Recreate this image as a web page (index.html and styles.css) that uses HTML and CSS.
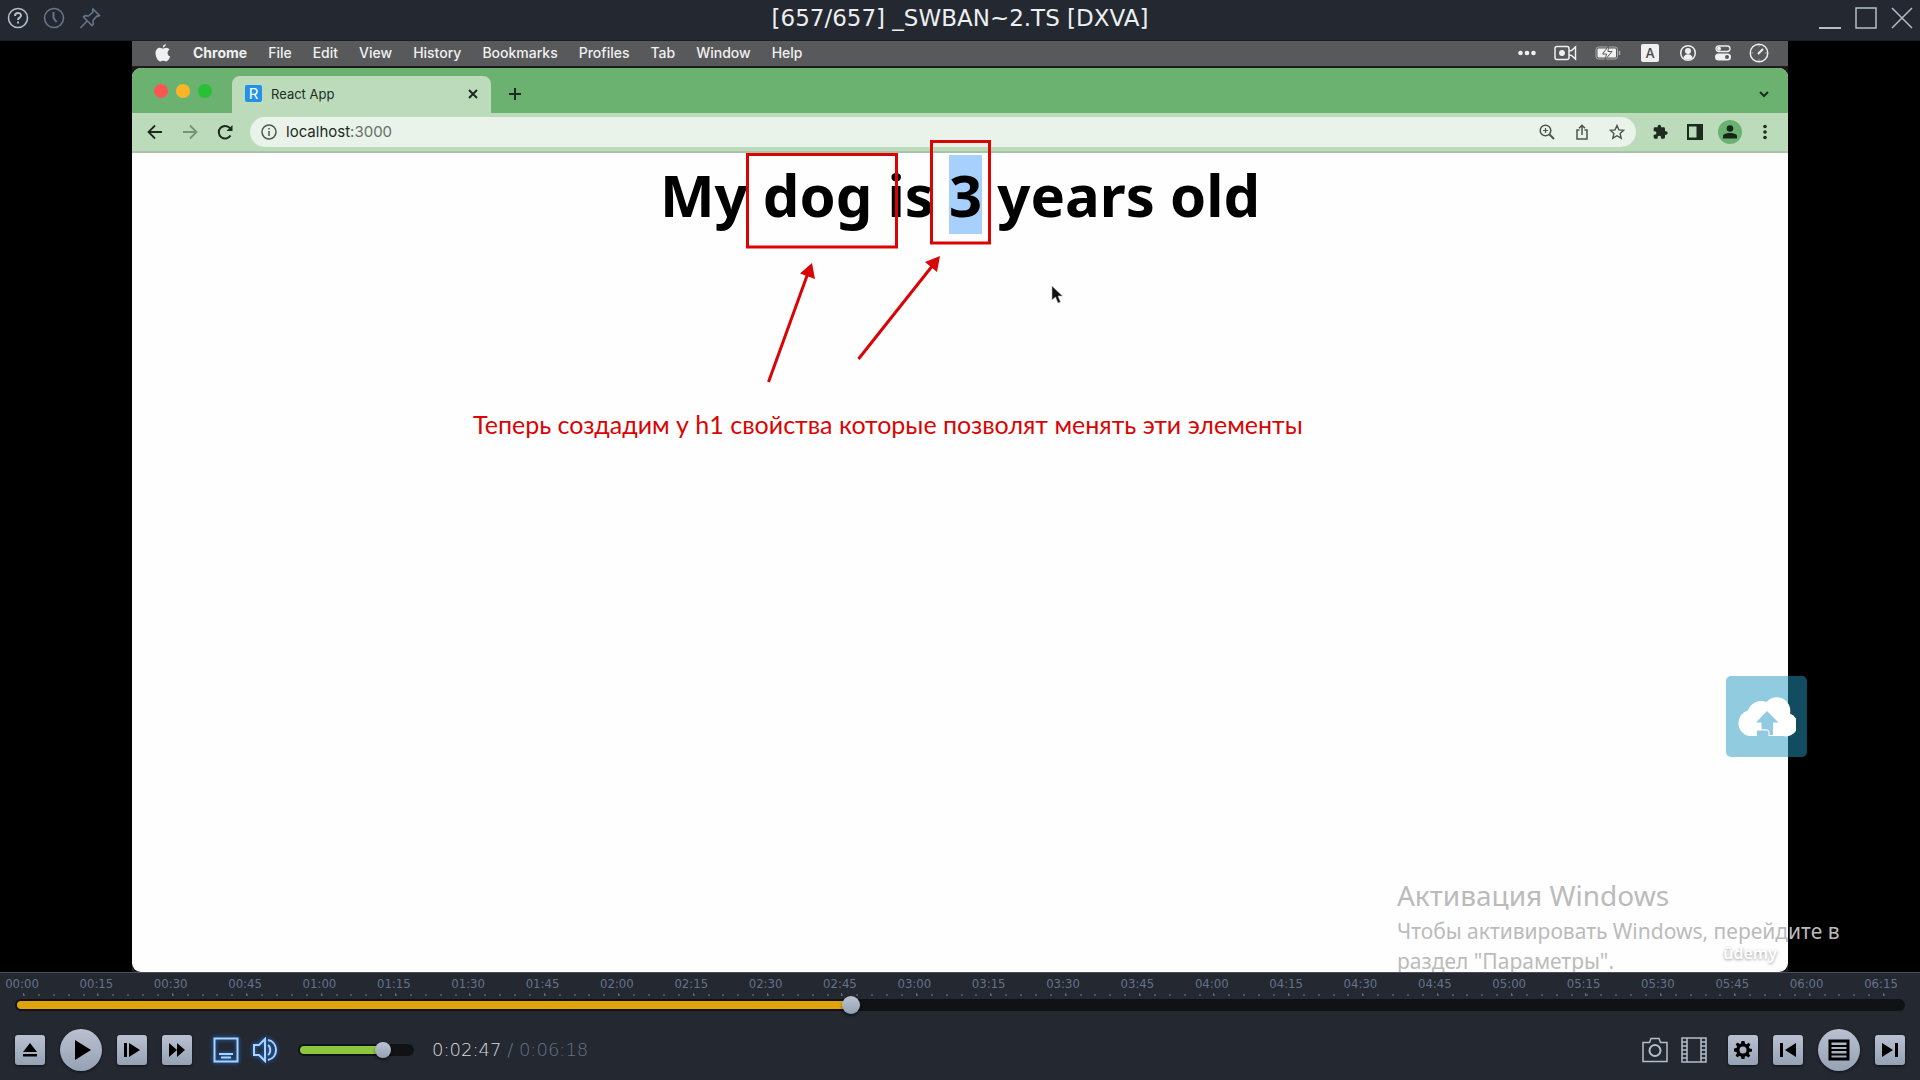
FILE: index.html
```html
<!DOCTYPE html>
<html lang="ru">
<head>
<meta charset="utf-8">
<title>[657/657] _SWBAN~2.TS [DXVA]</title>
<link rel="stylesheet" href="styles.css">
</head>
<body>
<header class="titlebar">
  <div class="titlebar-side">
    <button class="icon-btn bright" aria-label="Help"><svg width="22" height="22" viewBox="0 0 22 22" fill="none" stroke="currentColor" stroke-width="2"><circle cx="11" cy="11" r="9.5" stroke-width="1.6"/><path d="M8 9c0-4 6-4 6-.6 0 2.200-3 2.200-3 4.600M11 14.500v2"/></svg></button>
    <button class="icon-btn dim" aria-label="History"><svg width="22" height="22" viewBox="0 0 22 22" fill="none" stroke="currentColor" stroke-width="1.600"><circle cx="11" cy="11" r="9.500"/><path d="M10.500 5v6l3 4" stroke-width="2"/></svg></button>
    <button class="icon-btn dim" aria-label="Pin"><svg width="22" height="22" viewBox="0 0 22 22" fill="none" stroke="currentColor" stroke-width="1.600"><path d="M14 2l6.500 6.500-1.500.8-1-.3-4 4.500.3 3.500-1.300 1.500-8.500-8.500 1.500-1.300 3.500.3L14 5l-.5-1.500zM8.500 13.500L1.500 21"/></svg></button>
  </div>
  <h2 class="titlebar-title">[657/657] _SWBAN~2.TS [DXVA]</h2>
  <div class="titlebar-side end">
    <button class="icon-btn bright" aria-label="Minimize"><svg width="22" height="22" viewBox="0 0 22 22" stroke="currentColor" stroke-width="2"><path d="M0 21h22"/></svg></button>
    <button class="icon-btn bright" aria-label="Maximize"><svg width="22" height="22" viewBox="0 0 22 22" fill="none" stroke="currentColor" stroke-width="1.500"><path d="M1 1h20v20H1z"/></svg></button>
    <button class="icon-btn bright" aria-label="Close"><svg width="22" height="22" viewBox="0 0 22 22" stroke="currentColor" stroke-width="1.500"><path d="M1 1l20 20M21 1L1 21"/></svg></button>
  </div>
</header>

<main class="stage">
  <div class="video">
    <nav class="menubar">
      <svg class="apple" width="16" height="18" viewBox="0 0 16 18" fill="currentColor"><path d="M10.800 0c.2 1.600-1.300 3.500-3 3.500C7.600 1.900 9.200.2 10.800 0zM8 4.600c.8 0 1.700-.9 3.200-.9 1.400 0 2.700.8 3.400 1.900-3 1.800-2.500 5.800.6 7-.7 1.900-2.300 4.900-4.200 4.900-1.100 0-1.500-.7-2.800-.7s-1.800.7-2.800.7C3 17.500.5 13 .5 9.300c0-3.600 2.300-5.500 4.400-5.500 1.300 0 2.300.8 3.100.8z"/></svg>
      <a href="#" class="menu-app">Chrome</a><a href="#">File</a><a href="#">Edit</a><a href="#">View</a><a href="#">History</a><a href="#">Bookmarks</a><a href="#">Profiles</a><a href="#">Tab</a><a href="#">Window</a><a href="#">Help</a>
      <div class="status">
        <svg width="18" height="16" viewBox="0 0 18 16" fill="currentColor"><circle cx="2.500" cy="8" r="2.300"/><circle cx="9" cy="8" r="2.300"/><circle cx="15.500" cy="8" r="2.300"/></svg>
        <svg width="23" height="16" viewBox="0 0 23 16" fill="none" stroke="currentColor" stroke-width="1.500"><rect x="1" y="1.500" width="14" height="13" rx="2"/><circle cx="8" cy="8" r="2.200" fill="currentColor"/><path d="M15 6l2.500-.5L21.500 2v12l-4-3.500L15 10"/></svg>
        <svg width="26" height="16" viewBox="0 0 26 16"><rect x="1" y="2" width="21.500" height="12" rx="2.500" fill="none" stroke="#aaa"/><rect x="2.500" y="3.500" width="18.500" height="9" rx="1" fill="currentColor"/><path d="M13.500 1L7.500 9h4l-1.500 6 7-8.500h-4z" fill="currentColor" stroke="#58595b"/><path d="M24.500 6v4" stroke="#aaa" stroke-width="1.500"/></svg>
        <span class="lang">A</span>
        <svg width="18" height="18" viewBox="0 0 18 18" fill="currentColor"><circle cx="9" cy="9" r="7.300" fill="none" stroke="currentColor" stroke-width="1.500"/><circle cx="9" cy="7" r="3"/><path d="M4.500 14c0-5 9-5 9 0-2 2-7 2-9 0z"/></svg>
        <svg width="16" height="16" viewBox="0 0 16 16" fill="currentColor"><rect x="1" y="1" width="14" height="5.500" rx="2.700" fill="none" stroke="currentColor" stroke-width="1.300"/><circle cx="4" cy="3.800" r="2"/><rect x="0" y="8.500" width="16" height="7" rx="3.500"/><circle cx="12" cy="12" r="2" fill="#58595b"/></svg>
        <svg width="20" height="20" viewBox="0 0 20 20" fill="none" stroke="currentColor" stroke-width="1.400"><circle cx="10" cy="10" r="8.800"/><path d="M9 11l5-5" stroke-width="2"/><path d="M10 2.500v1M17.500 10h-1M10 17.500v-1M2.500 10h1" stroke-width="1"/></svg>
      </div>
    </nav>

    <section class="browser">
      <div class="tabstrip">
        <div class="lights"><i class="light red"></i><i class="light yellow"></i><i class="light green"></i></div>
        <div class="tab">
          <span class="favicon">R</span><span class="tab-title">React App</span>
          <button class="icon-btn dark" aria-label="Close tab"><svg width="10" height="10" viewBox="0 0 10 10" stroke="currentColor" stroke-width="2"><path d="M1 1l8 8M9 1L1 9"/></svg></button>
        </div>
        <button class="icon-btn dark new-tab" aria-label="New tab"><svg width="14" height="14" viewBox="0 0 14 14" stroke="currentColor" stroke-width="2"><path d="M7 1v12M1 7h12"/></svg></button>
        <button class="icon-btn dark tab-list" aria-label="Search tabs"><svg width="10" height="10" viewBox="0 0 10 10" fill="none" stroke="currentColor" stroke-width="2"><path d="M1 3l4 4 4-4"/></svg></button>
      </div>
      <div class="toolbar">
        <button class="icon-btn dark" aria-label="Back"><svg width="16" height="16" viewBox="0 0 16 16" fill="none" stroke="currentColor" stroke-width="1.800"><path d="M15 8H2M8 1.500L1.500 8 8 14.500"/></svg></button>
        <button class="icon-btn faded" aria-label="Forward"><svg width="16" height="16" viewBox="0 0 16 16" fill="none" stroke="currentColor" stroke-width="1.800"><path d="M1 8h13M8 1.500L14.500 8 8 14.500"/></svg></button>
        <button class="icon-btn dark" aria-label="Reload"><svg width="16" height="16" viewBox="0 0 16 16" fill="none" stroke="currentColor" stroke-width="2"><path d="M13.500 11.500A6.300 6.300 0 1 1 13 4.200"/><path d="M15.500 1v6h-6z" fill="currentColor" stroke="none"/></svg></button>
        <div class="omnibox">
          <svg width="16" height="16" viewBox="0 0 16 16" fill="none" stroke="currentColor" stroke-width="1.500"><circle cx="8" cy="8" r="7"/><path d="M8 7v5M8 4v1.600"/></svg>
          <div class="url">localhost<span class="port">:3000</span></div>
          <button class="icon-btn" aria-label="Zoom"><svg width="16" height="16" viewBox="0 0 16 16" fill="none" stroke="currentColor" stroke-width="1.500"><circle cx="6.500" cy="6.500" r="5.300"/><path d="M10.500 10.500L15 15" stroke-width="2"/><path d="M6.500 4v5M4 6.500h5" stroke-width="1.200"/></svg></button>
          <button class="icon-btn" aria-label="Share"><svg width="16" height="16" viewBox="0 0 16 16" fill="none" stroke="currentColor" stroke-width="1.500"><path d="M5.500 6H3v9h10V6h-2.500M8 11V1.500M5 4.300l3-3 3 3"/></svg></button>
          <button class="icon-btn" aria-label="Bookmark"><svg width="16" height="16" viewBox="0 0 16 16" fill="none" stroke="currentColor" stroke-width="1.400"><path d="M8 1.500l1.900 4.400 4.800.4-3.600 3.200 1.100 4.700L8 11.700l-4.200 2.500 1.100-4.700L1.300 6.300l4.800-.4z"/></svg></button>
        </div>
        <div class="tools">
          <button class="icon-btn dark" aria-label="Extensions"><svg width="16" height="16" viewBox="0 0 24 24" fill="currentColor"><path d="M21 11h-1.500V7a2 2 0 0 0-2-2h-4V3.500a2.500 2.500 0 0 0-5 0V5h-4a2 2 0 0 0-2 2v3.800H4a2.700 2.700 0 0 1 0 5.400H2.500V20a2 2 0 0 0 2 2h3.800v-1.500a2.700 2.700 0 0 1 5.400 0V22h3.800a2 2 0 0 0 2-2v-4H21a2.500 2.500 0 0 0 0-5z"/></svg></button>
          <button class="icon-btn dark" aria-label="Side panel"><svg width="16" height="16" viewBox="0 0 16 16" fill="currentColor"><path d="M0 0h16v16H0zM2 2.500v11h7.500v-11z" fill-rule="evenodd"/></svg></button>
          <button class="icon-btn avatar" aria-label="Profile"><svg width="14" height="14" viewBox="0 0 14 14" fill="currentColor"><circle cx="7" cy="3.500" r="3.300"/><path d="M0 13.500V11c0-4 14-4 14 0v2.500z"/></svg></button>
          <button class="icon-btn dark" aria-label="More"><svg width="16" height="16" viewBox="0 0 16 16" fill="currentColor"><circle cx="8" cy="2.500" r="1.800"/><circle cx="8" cy="8" r="1.800"/><circle cx="8" cy="13.500" r="1.800"/></svg></button>
        </div>
      </div>
      <div class="page">
        <h1 class="headline">My dog is <mark>3</mark> years old</h1>
        <p class="caption">Теперь создадим у h1 свойства которые позволят менять эти элементы</p>
        <svg class="notes" width="330" height="260" viewBox="740 135 330 260" fill="none" stroke="#d90404" stroke-width="3">
          <path d="M747.500 154.500h149v92.500h-149zM931.500 141.500h58v101.500h-58z"/>
          <path d="M768.500 382L808 273M858.500 359L933 265"/>
          <path d="M812 263l3 16-15-5.500zM940 256l-3 16-12-10z" fill="#d90404" stroke="none"/>
          <path d="M1052 286v14l3.500-3 2.500 6 2.500-1-2.500-6h4.500z" fill="#111" stroke="#bbb" stroke-width=".6"/>
        </svg>
        <span class="brand">ûdemy</span>
      </div>
    </section>
  </div>

  <aside class="activation">
    <p class="activation-title">Активация Windows</p>
    <p class="activation-text">Чтобы активировать Windows, перейдите в раздел "Параметры".</p>
  </aside>
  <button class="upload" aria-label="Upload"><svg width="58" height="40" viewBox="2 0 58 40"><path d="M13 39A12.500 13 0 0 1 12 13.500 14 14 0 0 1 30.500 5 13.500 13.500 0 0 1 54 16.500 11.800 11.800 0 0 1 47 39z" fill="#fff"/><path d="M31 14l11.500 11.500H37V38h-3.500c.5-6-2-6-8-5.500V25.500H20zM21 33.500h10c2 0 1.500 3 1.500 5.500H21z" fill="#92cae1"/></svg></button>
</main>

<footer class="player">
  <div class="ruler"><span>00:00</span><span>00:15</span><span>00:30</span><span>00:45</span><span>01:00</span><span>01:15</span><span>01:30</span><span>01:45</span><span>02:00</span><span>02:15</span><span>02:30</span><span>02:45</span><span>03:00</span><span>03:15</span><span>03:30</span><span>03:45</span><span>04:00</span><span>04:15</span><span>04:30</span><span>04:45</span><span>05:00</span><span>05:15</span><span>05:30</span><span>05:45</span><span>06:00</span><span>06:15</span></div>
  <div class="ticks"></div>
  <input class="slider seek" type="range" min="0" max="378" value="167" aria-label="Position" style="--fill: 44.2%">
  <div class="controls">
    <button class="key" aria-label="Eject"><svg width="16" height="16" viewBox="0 0 16 16"><path d="M8 1l7 9H1zM1 12h14v2.500H1z"/></svg></button>
    <button class="key round" aria-label="Play"><svg width="20" height="20" viewBox="0 0 20 20"><path d="M4 0l16 10L4 20z"/></svg></button>
    <button class="key" aria-label="Step"><svg width="16" height="16" viewBox="0 0 16 16"><path d="M0 1h3v14H0zM5 1l11 7-11 7z"/></svg></button>
    <button class="key" aria-label="Fast forward"><svg width="16" height="16" viewBox="0 0 16 16"><path d="M0 1l8 7-8 7zM8 1l8 7-8 7z"/></svg></button>
    <div class="toggles">
      <button class="icon-btn glow" aria-label="Screen"><svg width="26" height="26" viewBox="0 0 26 26" fill="none" stroke="currentColor" stroke-width="2"><path d="M1.500 1.500h23v23h-23zM6 17h14M8 20.500h10"/></svg></button>
      <button class="icon-btn glow" aria-label="Mute"><svg width="26" height="26" viewBox="0 0 26 26" fill="none" stroke="currentColor" stroke-width="2"><path d="M2 8h5l6-6v22l-6-6H2zM16 8c3 2 3 8 0 10M16 3c5 1 8 5 8 10s-3 9-8 10"/></svg></button>
    </div>
    <input class="slider volume" type="range" min="0" max="100" value="78" aria-label="Volume" style="--fill: 75%">
    <div class="time">0:02:47 <span class="total">/ 0:06:18</span></div>
    <div class="extras">
      <button class="icon-btn bright" aria-label="Snapshot"><svg width="26" height="26" viewBox="0 0 26 26" fill="none" stroke="currentColor" stroke-width="1.500"><path d="M1 5.500h6.500L9 1.500h8l1.500 4H25v19H1z"/><circle cx="13" cy="13.500" r="5.500" stroke-width="2"/></svg></button>
      <button class="icon-btn bright" aria-label="Record"><svg width="26" height="26" viewBox="0 0 26 26" fill="none" stroke="currentColor" stroke-width="1.500"><path d="M1 1h24v24H1zM6 1v24M20 1v24M1 5h5M1 9h5M1 13h5M1 17h5M1 21h5M20 5h5M20 9h5M20 13h5M20 17h5M20 21h5"/></svg></button>
    </div>
    <button class="key" aria-label="Settings"><svg width="18" height="18" viewBox="0 0 18 18"><path d="M7.500 0h3l.5 2.500 1.500.7L14.700 1.800l1.700 1.900-1.500 2.100.6 1.600L18 8v2.500l-2.500.5-.7 1.500 1.400 2.200-1.900 1.800-2.100-1.500-1.400.6L10.500 18h-3L7 15.500l-1.500-.6-2.200 1.400-1.800-1.900L3 12.300 2.400 11 0 10.500v-3L2.500 7l.6-1.500L1.700 3.300l1.900-1.800L5.700 3 7 2.500zM9 5.500a3.500 3.500 0 1 0 0 7 3.500 3.500 0 0 0 0-7z" fill-rule="evenodd"/></svg></button>
    <button class="key" aria-label="Previous"><svg width="16" height="16" viewBox="0 0 16 16"><path d="M0 1h3v14H0zM16 1v14L5 8z"/></svg></button>
    <button class="key round" aria-label="Playlist"><svg width="22" height="22" viewBox="0 0 22 22" fill="none" stroke="#000" stroke-width="3"><path d="M2 2h18v18H2z"/><path d="M3 7h16M3 11h16M3 15.500h16" stroke-width="2"/></svg></button>
    <button class="key" aria-label="Next"><svg width="16" height="16" viewBox="0 0 16 16"><path d="M13 1h3v14h-3zM0 1l11 7-11 7z"/></svg></button>
  </div>
</footer>
</body>
</html>
```
FILE: styles.css
```css
* { box-sizing: border-box; }

body {
  margin: 0;
  min-height: 100vh;
  display: flex;
  flex-direction: column;
  background: #000;
  font-family: "Noto Sans", sans-serif;
}

h1, h2, p { margin: 0; font-weight: 400; }
a { color: inherit; text-decoration: none; }
svg { display: block; flex: none; }
button { font: inherit; cursor: pointer; }

.icon-btn {
  display: flex;
  padding: 0;
  border: 0;
  background: none;
  color: #4b574c;
}
.icon-btn.bright { color: #b4bdca; }
.icon-btn.dim { color: #65758a; }
.icon-btn.dark { color: #1d2b1f; }
.icon-btn.faded { color: #779279; }

/* Player title bar */
.titlebar {
  display: flex;
  align-items: center;
  height: 41px;
  padding: 0 7px 4px;
  background: #242831;
  border-bottom: 1px solid #1a1d23;
}
.titlebar-side { display: flex; flex: 1; gap: 14px; }
.titlebar-side.end { justify-content: flex-end; }
.titlebar-title {
  font: 23px/30px "DejaVu Sans", sans-serif;
  color: #eceef0;
}

/* Video area */
.stage {
  position: relative;
  flex: 1;
  display: flex;
  padding: 0 6.875%;
}
.video { flex: 1; display: flex; flex-direction: column; background: #1c1c1d; }

.menubar {
  display: flex;
  align-items: center;
  gap: 21px;
  height: 25px;
  padding: 0 19px 1px 23px;
  background: #58595b;
  color: #f0f0f0;
  font: 500 14px/24px Inter, sans-serif;
}
.apple { margin-right: 1px; }
.menu-app { font-weight: 700; }
.status { display: flex; align-items: center; gap: 18px; margin-left: auto; }
.lang {
  width: 18px;
  height: 18px;
  margin: 0 2px;
  border-radius: 2px;
  background: #f0f0f0;
  color: #444;
  font-size: 13px;
  line-height: 18px;
  text-align: center;
}

/* Browser window */
.browser {
  flex: 1;
  display: flex;
  flex-direction: column;
  margin-top: 2px;
  border-radius: 9px;
  background: #fefefe;
}
.tabstrip {
  display: flex;
  align-items: center;
  height: 45px;
  padding: 8px 19px 0 22px;
  border-radius: 9px 9px 0 0;
  background: #6bb270;
}
.tabstrip > .icon-btn { padding-bottom: 2px; }
.lights { display: flex; gap: 8px; width: 78px; padding-bottom: 8px; }
.light { width: 14px; height: 14px; border-radius: 50%; }
.light.red { background: #fc5650; }
.light.yellow { background: #fdb526; }
.light.green { background: #27c138; }
.tab {
  display: flex;
  align-items: center;
  width: 259px;
  height: 37px;
  padding: 0 13px 2px;
  border-radius: 8px 8px 0 0;
  background: #bbdbbb;
  font: 13px/18px Inter, sans-serif;
  color: #222d23;
}
.favicon {
  width: 17px;
  height: 17px;
  border-radius: 2px;
  background: #2491e8;
  color: #fff;
  font-size: 15px;
  line-height: 17px;
  text-align: center;
}
.tab-title { flex: 1; margin-left: 9px; }
.new-tab { margin-left: 17px; }
.tab-list { margin-left: auto; }

.toolbar {
  display: flex;
  align-items: center;
  gap: 19px;
  height: 40px;
  padding: 0 15px;
  background: #bbdbbb;
  border-bottom: 2px solid #a9c3a9;
}
.omnibox {
  flex: 1;
  display: flex;
  align-items: center;
  gap: 19px;
  height: 30px;
  margin-left: -2px;
  padding: 0 11px;
  border-radius: 15px;
  background: #e9f3e9;
  color: #4b574c;
}
.url { flex: 1; margin-left: -10px; font: 15px/20px Inter, sans-serif; color: #1d2b1f; }
.port { color: #657066; }
.tools { display: flex; align-items: center; gap: 19px; margin-left: -3px; }
.avatar {
  width: 24px;
  height: 24px;
  margin: 0 -4px;
  align-items: center;
  justify-content: center;
  border-radius: 50%;
  background: #6bb270;
  color: #17261a;
}

.page { position: relative; flex: 1; }
.headline {
  font-size: 58px;
  font-weight: 700;
  line-height: 84px;
  text-align: center;
  color: #000;
}
.headline mark { background: #a8d0fd; color: inherit; }
.caption {
  margin: 171px 0 0 341px;
  font: 25px/32px Lato, sans-serif;
  color: #d90404;
}
.notes { position: absolute; top: -18px; left: calc(50% - 220px); }
.brand {
  position: absolute;
  right: 11px;
  bottom: 7px;
  font: 600 16px/24px "Noto Sans", sans-serif;
  color: #fff;
  text-shadow: 0 1px 3px #999;
}

/* Floating overlays */
.activation {
  position: absolute;
  right: 75px;
  bottom: -4px;
  width: 448px;
  color: #bbb;
}
.activation-title { margin-bottom: 2px; font-size: 28px; line-height: 38px; }
.activation-text { font-size: 21px; line-height: 30px; }
.upload {
  position: absolute;
  right: 113px;
  bottom: 215px;
  width: 81px;
  height: 81px;
  display: flex;
  align-items: center;
  justify-content: center;
  padding: 0;
  border: 0;
  border-radius: 5px;
  background: rgba(34, 152, 194, 0.5);
}

/* Player controls */
.player {
  position: relative;
  padding: 3px 15px 9px;
  background: #242831;
  border-top: 1px solid #4a4e55;
}
.ruler {
  display: flex;
  justify-content: space-between;
  margin: 0 7px 1px -10px;
  font: 13px/16px "DejaVu Sans Condensed", "DejaVu Sans", sans-serif;
  font-stretch: condensed;
  color: #65738a;
}
.ruler span { width: 34px; text-align: center; }
.ticks {
  height: 3px;
  margin: 0 7px 0 8px;
  background:
    repeating-linear-gradient(to right, #5d6878 0 1px, transparent 1px calc(100% / 25.2)),
    repeating-linear-gradient(to right, #4a5361 0 2px, transparent 2px calc(100% / 126)) 0 100% / 100% 2px no-repeat;
}

.slider {
  --rail: 12px;
  display: block;
  appearance: none;
  height: 18px;
  margin: 0;
  background: none;
}
.slider::-webkit-slider-runnable-track {
  height: var(--rail);
  border: 2px solid #101216;
  border-radius: 6px;
  background: linear-gradient(var(--tint), var(--tint)) 0 0 / var(--fill) 100% no-repeat #101216;
}
.slider::-webkit-slider-thumb {
  appearance: none;
  width: 18px;
  height: 18px;
  margin-top: -5px;
  border-radius: 50%;
  background: linear-gradient(#bcc4d2, #94a0b2);
  box-shadow: 0 2px 3px rgba(0, 0, 0, 0.5);
}
.seek { --tint: #e0a50e; width: 100%; }
.volume { --tint: #8cc63f; width: 116px; }
.volume::-webkit-slider-thumb { width: 16px; height: 16px; margin-top: -4px; }

.controls { display: flex; align-items: center; gap: 15px; padding-top: 15px; }
.key {
  display: flex;
  align-items: center;
  justify-content: center;
  width: 30px;
  height: 30px;
  padding: 0;
  border: 0;
  border-radius: 3px;
  background: linear-gradient(#b9c1d0, #95a2b5);
  box-shadow: 0 1px 3px rgba(0, 0, 0, 0.6);
}
.key.round { width: 42px; height: 42px; border-radius: 50%; }
.toggles { display: flex; gap: 13px; margin: 0 5px 0 6px; }
.glow { color: #a9d2ff; filter: drop-shadow(0 0 2px #1d7df0); }
.time {
  margin-left: 3px;
  font: 200 18px/24px "DejaVu Sans Light", "DejaVu Sans", sans-serif;
  color: #dcdcdc;
}
.total { color: #65738a; }
.extras { display: flex; gap: 13px; margin: 0 6px 0 auto; }
```
